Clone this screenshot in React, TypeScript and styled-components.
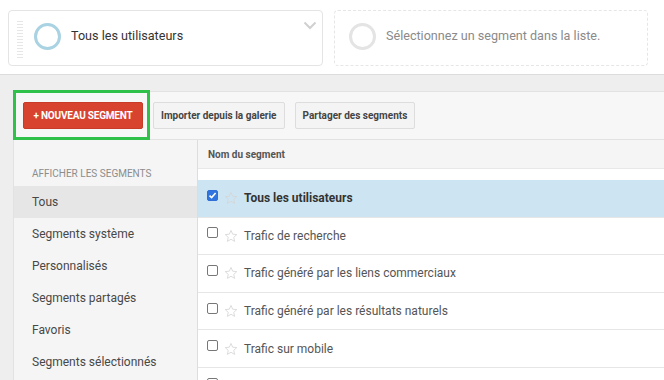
import React from 'react';
import styled, { createGlobalStyle } from 'styled-components';

const GlobalStyle = createGlobalStyle`
  html, body {
    margin: 0;
    padding: 0;
    background: #eeeeee;
    font-family: Roboto, 'Liberation Sans', Arial, sans-serif;
    overflow: hidden;
  }
`;

const Page = styled.div`
  width: 664px;
  height: 380px;
  overflow: hidden;
  background: #eeeeee;
`;

const SegmentBar = styled.div`
  display: flex;
  gap: 11px;
  height: 75px;
  box-sizing: border-box;
  padding: 10px 16px 0 8px;
  background: #ffffff;
  border-bottom: 1px solid #dcdcdc;
`;

const SegmentCard = styled.div<{ $empty?: boolean }>`
  position: relative;
  display: flex;
  align-items: center;
  width: ${(p) => (p.$empty ? '314px' : '315px')};
  height: 56px;
  box-sizing: border-box;
  padding-left: ${(p) => (p.$empty ? '14px' : '25px')};
  padding-bottom: 5px;
  border: 1px ${(p) => (p.$empty ? 'dashed #e6e6e6' : 'solid #e4e4e4')};
  border-radius: 4px;
  background: #ffffff;
`;

const Handle = styled.div`
  position: absolute;
  left: 8px;
  top: 10px;
  width: 6px;
  height: 38px;
  background-image: repeating-linear-gradient(
    to bottom,
    #e6e6e6 0,
    #e6e6e6 1px,
    transparent 1px,
    transparent 3px
  );
`;

const Ring = styled.div<{ $color: string }>`
  width: 21px;
  height: 21px;
  border-radius: 50%;
  border: 3px solid ${(p) => p.$color};
  margin-right: 10px;
  margin-top: 2px;
  flex-shrink: 0;
`;

const CardLabel = styled.span<{ $muted?: boolean }>`
  font-size: 12.6px;
  color: ${(p) => (p.$muted ? '#8a8a8a' : '#333333')};
`;

const Chevron = styled.svg`
  position: absolute;
  right: 5px;
  top: 10px;
`;

const Workspace = styled.div`
  padding: 16px 0 0 13px;
`;

const Panel = styled.div`
  background: #f7f7f7;
  border-top: 1px solid #e2e2e2;
  border-left: 1px solid #e2e2e2;
`;

const Toolbar = styled.div`
  display: flex;
  align-items: center;
  gap: 10px;
  height: 48px;
  margin-top: -1px;
  margin-left: -1px;
`;

const Highlight = styled.div`
  box-sizing: border-box;
  width: 137px;
  height: 50px;
  border: 3px solid #2fc14a;
  display: flex;
  align-items: center;
  padding-left: 7px;
  margin-right: -7px;
`;

const Button = styled.button<{ $primary?: boolean }>`
  height: 27px;
  box-sizing: border-box;
  padding: 0 7px;
  white-space: nowrap;
  font-family: Roboto, 'Liberation Sans', Arial, sans-serif;
  font-size: 10px;
  font-weight: 700;
  letter-spacing: ${(p) => (p.$primary ? '-0.2px' : '0')};
  border-radius: 2px;
  cursor: pointer;
  color: ${(p) => (p.$primary ? '#ffffff' : '#444444')};
  background: ${(p) => (p.$primary ? '#d8432f' : '#f4f4f4')};
  border: 1px solid ${(p) => (p.$primary ? '#c73b28' : '#dddddd')};
  width: ${(p) => (p.$primary ? '120px' : 'auto')};
`;

const Body = styled.div`
  display: flex;
  border-top: 1px solid #e2e2e2;
`;

const Sidebar = styled.div`
  width: 183px;
  flex-shrink: 0;
  background: #f5f5f5;
  padding-top: 28px;
`;

const SideTitle = styled.div`
  font-size: 10px;
  color: #8c8c8c;
  padding-left: 18px;
  height: 18px;
`;

const SideItem = styled.div<{ $active?: boolean }>`
  height: 32px;
  display: flex;
  align-items: center;
  padding-left: 18px;
  font-size: 12px;
  color: #484848;
  background: ${(p) => (p.$active ? '#e6e6e6' : 'transparent')};
`;

const Table = styled.div`
  flex: 1;
  background: #ffffff;
  border-left: 1px solid #dddddd;
`;

const TableHead = styled.div`
  height: 28px;
  display: flex;
  align-items: center;
  padding-left: 10px;
  background: #f5f5f5;
  border-bottom: 1px solid #e8e8e8;
  font-size: 10px;
  font-weight: 700;
  color: #555555;
`;

const Spacer = styled.div`
  height: 11px;
`;

const Row = styled.div<{ $selected?: boolean }>`
  height: 36.6px;
  display: flex;
  align-items: center;
  padding-left: 9px;
  border-bottom: 1px solid #e6e6e6;
  background: ${(p) => (p.$selected ? '#cde5f2' : '#ffffff')};
  font-size: 12px;
  font-weight: ${(p) => (p.$selected ? 700 : 400)};
  color: ${(p) => (p.$selected ? '#333333' : '#555555')};
`;

const Box = styled.span<{ $checked?: boolean }>`
  width: 11px;
  height: 11px;
  box-sizing: border-box;
  border-radius: 2px;
  border: 1px solid ${(p) => (p.$checked ? '#2f6fd6' : '#777777')};
  background: ${(p) => (p.$checked ? '#2f74e0' : '#ffffff')};
  display: inline-flex;
  align-items: center;
  justify-content: center;
  margin-top: -6px;
  margin-right: 6px;
`;

const Star = styled.svg`
  margin-right: 6px;
  flex-shrink: 0;
`;

const Checkbox = ({ checked }: { checked?: boolean }) => (
  <Box $checked={checked}>
    {checked && (
      <svg width="9" height="9" viewBox="0 0 9 9">
        <path d="M1.5 4.6 L3.6 6.6 L7.6 2" fill="none" stroke="#fff" strokeWidth="1.6" />
      </svg>
    )}
  </Box>
);

const StarIcon = () => (
  <Star width="14" height="14" viewBox="0 0 24 24">
    <path
      d="M12 2.5l2.9 6.4 7 .7-5.2 4.7 1.5 6.9L12 17.6l-6.2 3.6 1.5-6.9L2.1 9.6l7-.7z"
      fill="none"
      stroke="#d4d4d4"
      strokeWidth="1.4"
      strokeLinejoin="round"
    />
  </Star>
);

const sideItems = [
  'Tous',
  'Segments système',
  'Personnalisés',
  'Segments partagés',
  'Favoris',
  'Segments sélectionnés',
];

// last row is cut by the bottom of the view, only its box and star show
const segments = [
  'Tous les utilisateurs',
  'Trafic de recherche',
  'Trafic généré par les liens commerciaux',
  'Trafic généré par les résultats naturels',
  'Trafic sur mobile',
  '',
];

const App = () => {
  return (
    <Page>
      <GlobalStyle />
      <SegmentBar>
        <SegmentCard>
          <Handle />
          <Ring $color="#a9d2e2" />
          <CardLabel>Tous les utilisateurs</CardLabel>
          <Chevron width="14" height="9" viewBox="0 0 14 9">
            <path d="M1.5 1.5 L7 7 L12.5 1.5" fill="none" stroke="#d0d0d0" strokeWidth="2" />
          </Chevron>
        </SegmentCard>
        <SegmentCard $empty>
          <Ring $color="#e4e4e4" />
          <CardLabel $muted>Sélectionnez un segment dans la liste.</CardLabel>
        </SegmentCard>
      </SegmentBar>
      <Workspace>
        <Panel>
          <Toolbar>
            <Highlight>
              <Button $primary>+ NOUVEAU SEGMENT</Button>
            </Highlight>
            <Button>Importer depuis la galerie</Button>
            <Button>Partager des segments</Button>
          </Toolbar>
          <Body>
            <Sidebar>
              <SideTitle>AFFICHER LES SEGMENTS</SideTitle>
              {sideItems.map((item, i) => (
                <SideItem key={item} $active={i === 0}>
                  {item}
                </SideItem>
              ))}
            </Sidebar>
            <Table>
              <TableHead>Nom du segment</TableHead>
              <Spacer />
              {segments.map((s, i) => (
                <Row key={i} $selected={i === 0}>
                  <Checkbox checked={i === 0} />
                  <StarIcon />
                  {s}
                </Row>
              ))}
            </Table>
          </Body>
        </Panel>
      </Workspace>
    </Page>
  );
};

export default App;
